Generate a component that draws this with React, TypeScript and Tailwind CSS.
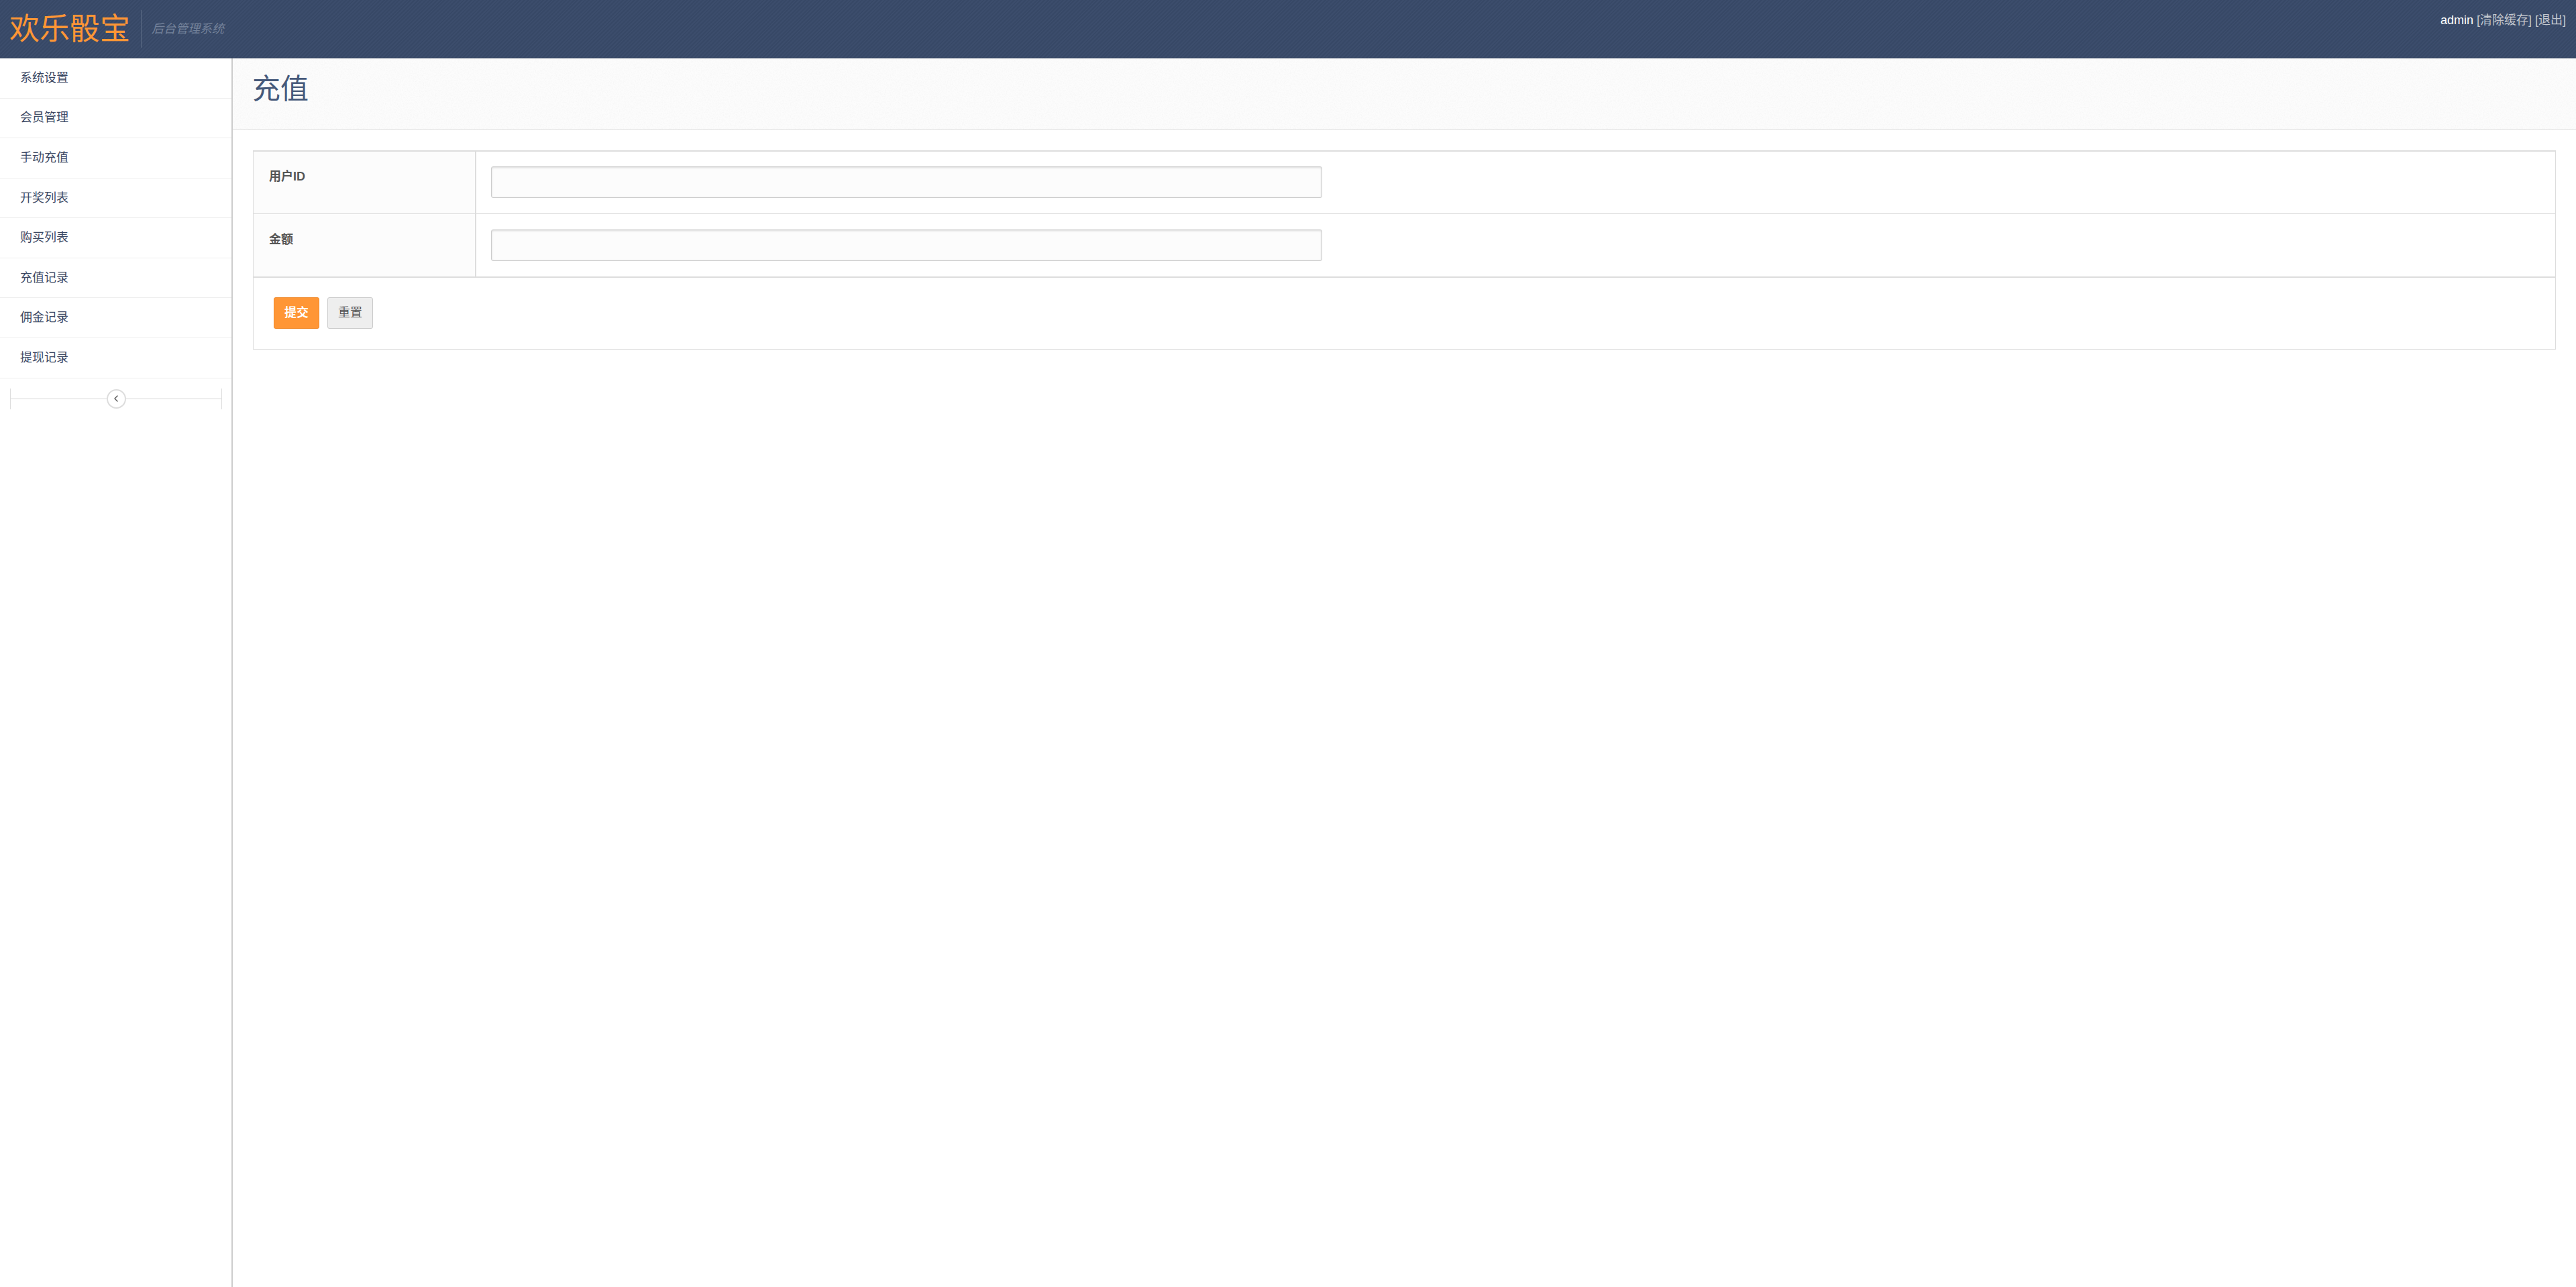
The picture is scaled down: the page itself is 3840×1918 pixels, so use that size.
import { ChevronLeft } from "lucide-react";

const menu = ["系统设置", "会员管理", "手动充值", "开奖列表", "购买列表", "充值记录", "佣金记录", "提现记录"];

function Noise() {
  return (
    <svg className="absolute inset-0 w-full h-full pointer-events-none" aria-hidden="true">
      <filter id="paper">
        <feTurbulence type="fractalNoise" baseFrequency="0.55" numOctaves="3" seed="4" />
        <feColorMatrix values="0 0 0 0 0.5  0 0 0 0 0.5  0 0 0 0 0.5  0.12 0.12 0 0 -0.1" />
      </filter>
      <rect width="100%" height="100%" filter="url(#paper)" />
    </svg>
  );
}

function FormRow({ label, second }: { label: string; second?: boolean }) {
  return (
    <div className={`flex ${second ? "h-[95px] border-b-2" : "h-[93px] border-b"} border-[#dddddd]`}>
      <div className={`w-[332px] shrink-0 bg-[#fcfcfc] border-r-2 border-[#dddddd] pl-[23px] ${second ? "pt-[25px]" : "pt-[24px]"} text-[18px] leading-[27px] font-bold text-[#555555]`}>
        {label}
      </div>
      <div className={`flex-1 pl-[22px] ${second ? "pt-[23px]" : "pt-[22px]"}`}>
        <input
          type="text"
          className="block w-[1239px] h-[47px] bg-[#fcfcfc] border border-[#cccccc] rounded-[3px] shadow-[inset_0_1px_3px_rgba(0,0,0,0.15)] outline-none"
        />
      </div>
    </div>
  );
}

export default function App() {
  return (
    <div className="flex flex-col w-full h-[1918px] bg-white overflow-hidden font-['Liberation_Sans','Noto_Sans_CJK_SC',sans-serif]">
      {/* header */}
      <header className="flex justify-between h-[87px] shrink-0 border-b border-[#2e3d57] bg-[repeating-linear-gradient(135deg,#374866_0px,#374866_2px,#3c4d6c_2px,#3c4d6c_4px)]">
        <div className="flex items-center pl-[14px]">
          <div className="text-[45px] leading-[54px] pt-px text-[#ff9635] w-[196px]">欢乐骰宝</div>
          <div className="w-px h-[56px] bg-[#5c6b85]" />
          <div className="pl-[15px] text-[18px] italic text-[#74829a]">后台管理系统</div>
        </div>
        <div className="pr-[15px] pt-[17px] text-[18px] leading-[27px] text-[#c4c8cf]">
          <span className="text-white">admin</span> <a>[清除缓存]</a> <a>[退出]</a>
        </div>
      </header>

      <div className="flex flex-1 min-h-0">
        {/* sidebar */}
        <aside className="w-[347px] shrink-0 border-r-2 border-[#cccccc] bg-white">
          <ul>
            {menu.map((item) => (
              <li key={item} className="flex items-center h-[59.58px] pl-[30px] border-b border-[#eeeeee] text-[18px] text-[#3b4863]">
                {item}
              </li>
            ))}
          </ul>
          <div className="flex items-center h-[31px] w-[316px] ml-[15px] mt-[15px] border-x border-[#dddddd]">
            <div className="flex-1 h-0.5 bg-[#eeeeee]" />
            <div className="flex items-center justify-center w-[29px] h-[29px] rounded-full border-2 border-[#dddddd] bg-white">
              <ChevronLeft className="w-4 h-4 text-[#555555]" strokeWidth={2} />
            </div>
            <div className="flex-1 h-0.5 bg-[#eeeeee]" />
          </div>
        </aside>

        {/* content */}
        <main className="flex-1 min-w-0">
          <div className="relative h-[107px] pl-[29px] border-b border-[#dddddd] bg-[#fcfcfc]">
            <Noise />
            <h1 className="relative pt-[21px] text-[42px] leading-[50px] font-normal text-[#46597a]">充值</h1>
          </div>
          <div className="pt-[30px] pl-[30px] pr-[30px]">
            <div className="border-x border-t-2 border-b border-[#dddddd]">
              <FormRow label="用户ID" />
              <FormRow label="金额" second />
              <div className="flex gap-3 h-[106px] pl-[30px] pt-[29px]">
                <button className="w-[68px] h-[47px] rounded-[3px] border border-[#f08a2c] bg-[#ff9635] text-[18px] font-bold text-white">提交</button>
                <button className="w-[68px] h-[47px] rounded-[3px] border border-[#cccccc] bg-[#eeeeee] text-[18px] text-[#555555]">重置</button>
              </div>
            </div>
          </div>
        </main>
      </div>
    </div>
  );
}
